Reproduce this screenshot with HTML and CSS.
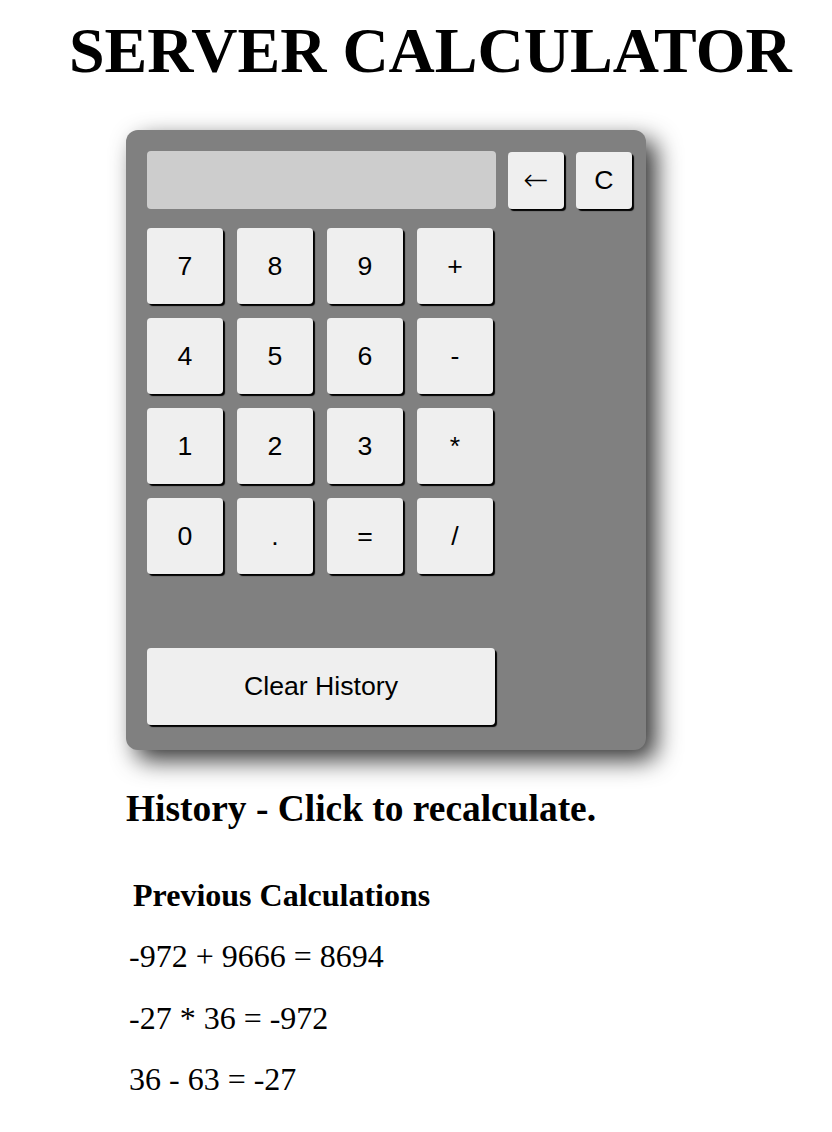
FILE: index.html
```html
<!DOCTYPE html>
<html lang="en">
<head>
<meta charset="utf-8">
<title>Server Calculator</title>
<link rel="stylesheet" href="styles.css">
</head>
<body>
  <h1 class="title">SERVER CALCULATOR</h1>
  <div class="calculator">
    <div class="top-row">
      <div class="display"></div>
      <button class="key key-small"><span class="arrow">←</span></button>
      <button class="key key-small">C</button>
    </div>
    <div class="keypad">
      <button class="key">7</button>
      <button class="key">8</button>
      <button class="key">9</button>
      <button class="key">+</button>
      <button class="key">4</button>
      <button class="key">5</button>
      <button class="key">6</button>
      <button class="key">-</button>
      <button class="key">1</button>
      <button class="key">2</button>
      <button class="key">3</button>
      <button class="key">*</button>
      <button class="key">0</button>
      <button class="key">.</button>
      <button class="key">=</button>
      <button class="key">/</button>
    </div>
    <button class="key key-wide">Clear History</button>
  </div>
  <div class="history">
    <h3 class="history-title">History - Click to recalculate.</h3>
    <div class="history-head">Previous Calculations</div>
    <div class="history-item">-972 + 9666 = 8694</div>
    <div class="history-item">-27 * 36 = -972</div>
    <div class="history-item">36 - 63 = -27</div>
  </div>
</body>
</html>
```

FILE: styles.css
```css
html, body {
  margin: 0;
  padding: 0;
  background: #ffffff;
}

body {
  font-family: "Liberation Serif", "Times New Roman", serif;
  color: #000;
}

.title {
  margin: 15px 0 0 69px;
  font-size: 64px;
  line-height: 71px;
  font-weight: bold;
  white-space: nowrap;
}

.calculator {
  box-sizing: border-box;
  width: 520px;
  height: 620px;
  margin: 44px 0 0 126px;
  padding: 21px 0 0 21px;
  background: #808080;
  border-radius: 12px;
  box-shadow: 10px 10px 24px rgba(0, 0, 0, 0.8);
}

.top-row {
  display: flex;
  align-items: flex-start;
  gap: 12px;
  height: 58px;
}

.display {
  width: 349px;
  height: 58px;
  background: #cdcdcd;
  border-radius: 4px;
}

.key {
  box-sizing: border-box;
  border: none;
  padding: 0;
  margin: 0;
  background: #efefef;
  border-radius: 4px;
  box-shadow: 2px 2px 1px #000;
  font-family: "Liberation Sans", Arial, sans-serif;
  font-size: 26.67px;
  color: #000;
  width: 76px;
  height: 76px;
}

.key-small {
  width: 56px;
  height: 57px;
  margin-top: 1px;
}

.arrow {
  font-family: "DejaVu Sans", sans-serif;
  font-size: 30px;
  font-weight: 300;
  line-height: 1;
}

.keypad {
  display: grid;
  grid-template-columns: repeat(4, 76px);
  grid-auto-rows: 76px;
  gap: 14px;
  margin-top: 19px;
}

.key-wide {
  display: block;
  width: 348px;
  height: 77px;
  margin-top: 74px;
}

.history {
  margin-left: 126px;
}

.history-title {
  margin: 38px 0 0 0;
  font-size: 37.44px;
  line-height: 42px;
  font-weight: bold;
}

.history-head {
  margin-top: 47px;
  padding-left: 7px;
  font-size: 32px;
  line-height: 36px;
  font-weight: bold;
}

.history-item {
  margin-top: 25px;
  padding-left: 3px;
  font-size: 32px;
  line-height: 36px;
}

.history-item + .history-item {
  margin-top: 25.5px;
}
```
